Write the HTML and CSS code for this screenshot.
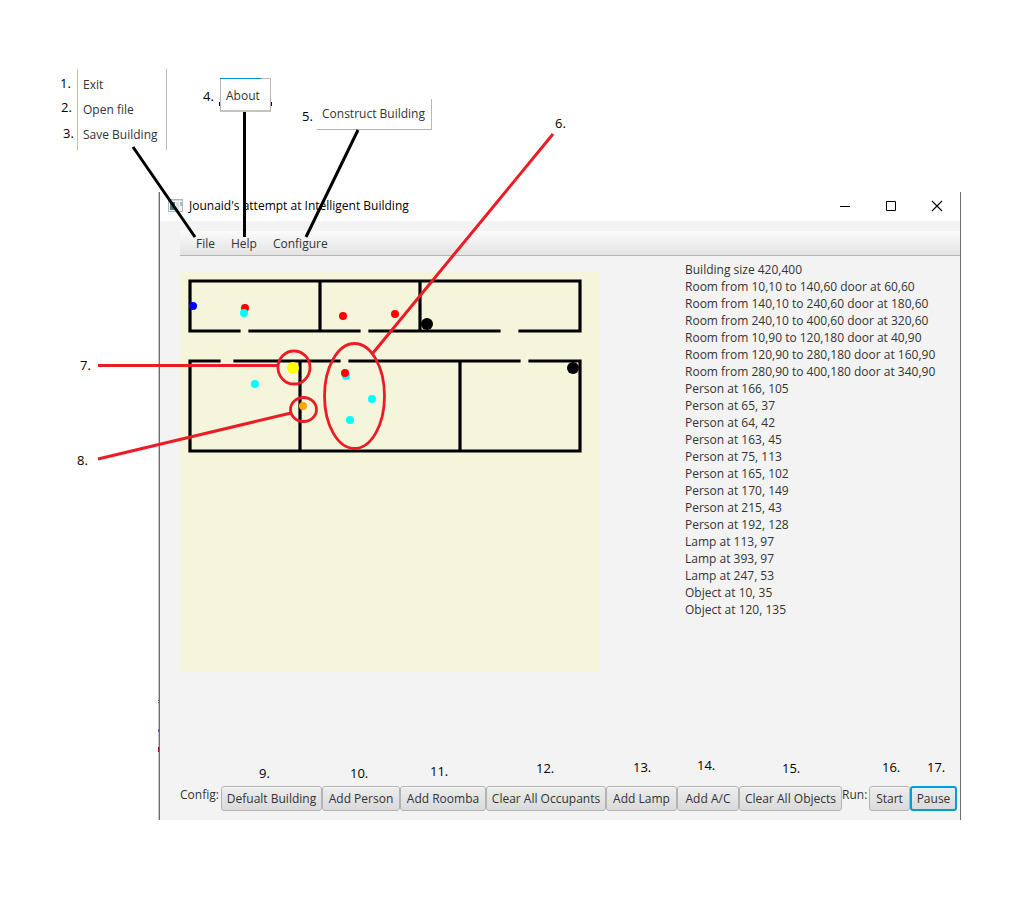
FILE: index.html
```html
<!DOCTYPE html>
<html lang="en">
<head>
<meta charset="utf-8">
<title>Intelligent Building user guide</title>
<link rel="stylesheet" href="styles.css">
</head>
<body>
<main class="stage">
  <section class="window">
    <header class="titlebar">
      <svg class="app-icon" width="15" height="13" viewBox="0 0 15 13" aria-hidden="true">
        <rect x=".5" y=".5" width="14" height="12" fill="#f4f4f4" stroke="#b4b4b4"/>
        <rect x="1" y="1" width="13" height="1" fill="#d8dce0"/>
        <rect x="2" y="3" width="5" height="8" fill="#3f7f86"/>
        <rect x="8" y="3" width="3" height="8" fill="#e0e0e0"/>
        <rect x="12" y="3" width="2" height="4" fill="#9fc4cc"/>
      </svg>
      <h1 class="title">Jounaid's attempt at Intelligent Building</h1>
      <div class="controls">
        <button class="control" type="button" aria-label="Minimize"><svg width="12" height="12" viewBox="0 0 12 12"><path d="M1 6.500h10" stroke="#000"/></svg></button>
        <button class="control" type="button" aria-label="Maximize"><svg width="12" height="12" viewBox="0 0 12 12"><path d="M1.500 1.500h9v9h-9z" fill="none" stroke="#000"/></svg></button>
        <button class="control" type="button" aria-label="Close"><svg width="12" height="12" viewBox="0 0 12 12"><path d="M1 1l10 10M11 1L1 11" stroke="#000" stroke-width="1.100"/></svg></button>
      </div>
    </header>
    <div class="content">
      <nav class="menubar">
        <button class="menu" type="button">File</button>
        <button class="menu" type="button">Help</button>
        <button class="menu" type="button">Configure</button>
      </nav>
      <div class="workspace">
        <svg class="plan" width="420" height="400" viewBox="0 0 420 400" role="img" aria-label="Building plan">
          <rect width="420" height="400" fill="#f5f5dc"/>
          <g fill="none" stroke="#000" stroke-width="3.200" stroke-linecap="square">
            <path d="M59 59H10V9H400V59H340M240 9V59M140 9V59M70 59H179M190 59H319"/>
            <path d="M39 89H10V179H400V89H350M55 89H159M170 89H339M120 89V179M280 89V179"/>
          </g>
          <circle cx="13" cy="34" r="4" fill="#00f"/>
          <circle cx="65" cy="36" r="4" fill="#f00"/>
          <circle cx="64" cy="41" r="4" fill="#0ff"/>
          <circle cx="163" cy="44" r="4" fill="#f00"/>
          <circle cx="215" cy="42" r="4" fill="#f00"/>
          <circle cx="247" cy="52" r="6"/>
          <circle cx="393" cy="96" r="6"/>
          <circle cx="113" cy="96" r="6" fill="#ff0"/>
          <circle cx="75" cy="112" r="4" fill="#0ff"/>
          <circle cx="166" cy="104" r="4" fill="#0ff"/>
          <circle cx="165" cy="101" r="4" fill="#f00"/>
          <circle cx="192" cy="127" r="4" fill="#0ff"/>
          <circle cx="170" cy="148" r="4" fill="#0ff"/>
          <circle cx="123" cy="134" r="4" fill="#ffa500"/>
        </svg>
        <ul class="log">
          <li>Building size 420,400</li>
          <li>Room from 10,10 to 140,60 door at 60,60</li>
          <li>Room from 140,10 to 240,60 door at 180,60</li>
          <li>Room from 240,10 to 400,60 door at 320,60</li>
          <li>Room from 10,90 to 120,180 door at 40,90</li>
          <li>Room from 120,90 to 280,180 door at 160,90</li>
          <li>Room from 280,90 to 400,180 door at 340,90</li>
          <li>Person at 166, 105</li>
          <li>Person at 65, 37</li>
          <li>Person at 64, 42</li>
          <li>Person at 163, 45</li>
          <li>Person at 75, 113</li>
          <li>Person at 165, 102</li>
          <li>Person at 170, 149</li>
          <li>Person at 215, 43</li>
          <li>Person at 192, 128</li>
          <li>Lamp at 113, 97</li>
          <li>Lamp at 393, 97</li>
          <li>Lamp at 247, 53</li>
          <li>Object at 10, 35</li>
          <li>Object at 120, 135</li>
        </ul>
      </div>
      <footer class="toolbar">
        <span class="caption">Config:</span>
        <button class="btn" type="button">Defualt Building</button>
        <button class="btn" type="button">Add Person</button>
        <button class="btn" type="button">Add Roomba</button>
        <button class="btn" type="button">Clear All Occupants</button>
        <button class="btn" type="button">Add Lamp</button>
        <button class="btn" type="button">Add A/C</button>
        <button class="btn" type="button">Clear All Objects</button>
        <span class="caption">Run:</span>
        <button class="btn" type="button">Start</button>
        <button class="btn btn-focus" type="button">Pause</button>
      </footer>
    </div>
  </section>

  <div class="popup popup-file">
    <button class="item" type="button">Exit</button>
    <button class="item" type="button">Open file</button>
    <button class="item" type="button">Save Building</button>
  </div>
  <div class="popup popup-help"><button class="item" type="button">About</button></div>
  <div class="popup popup-configure"><button class="item" type="button">Construct Building</button></div>

  <svg class="lines" width="1018" height="900" viewBox="0 0 1018 900" aria-hidden="true">
    <g fill="none" stroke="#000" stroke-width="3">
      <path d="M133 147L195 237M244.500 112V237M358 130L306 237"/>
    </g>
    <path d="M219 102h1v4h-1zM271 102h1v4h-1z"/>
    <path d="M220 78h41v1h-41z" fill="#0093c8"/>
    <g fill="none" stroke="#ed1c24" stroke-width="3">
      <path d="M553 134L373 353M98 365.500H278M98 459L291 413"/>
      <ellipse cx="354.500" cy="396" rx="30" ry="52.500" stroke-width="2.800"/>
      <ellipse cx="294" cy="367.500" rx="16" ry="16.500" stroke-width="2.800"/>
      <ellipse cx="303.500" cy="409.500" rx="13" ry="12" stroke-width="2.800"/>
    </g>
    <g fill="#3a66c8">
      <path d="M158 700h1v1h-1zM158 702h1v1h-1zM158 729h1v3h-1z"/>
      <path d="M158 747h1v5h-1z" fill="#80005a"/>
    </g>
  </svg>

  <span class="mark m1">1.</span>
  <span class="mark m2">2.</span>
  <span class="mark m3">3.</span>
  <span class="mark m4">4.</span>
  <span class="mark m5">5.</span>
  <span class="mark m6">6.</span>
  <span class="mark m7">7.</span>
  <span class="mark m8">8.</span>
  <span class="mark m9">9.</span>
  <span class="mark m10">10.</span>
  <span class="mark m11">11.</span>
  <span class="mark m12">12.</span>
  <span class="mark m13">13.</span>
  <span class="mark m14">14.</span>
  <span class="mark m15">15.</span>
  <span class="mark m16">16.</span>
  <span class="mark m17">17.</span>
</main>
</body>
</html>
```
FILE: styles.css
```css
* { box-sizing: border-box; }
body {
  margin: 0;
  background: #fff;
  color: #333;
  font: 12px/17px "Open Sans", "Noto Sans", sans-serif;
}
button { margin: 0; padding: 0; border: 0; background: none; color: inherit; font: inherit; white-space: nowrap; }
.stage { position: relative; min-height: 900px; padding: 192px 57px 80px 159px; }

.window {
  border-left: 1px solid #6e6e6e;
  border-right: 1px solid #6e6e6e;
  background: #f3f3f3;
  box-shadow: -1px 0 #c8c8c8;
}
.titlebar { display: flex; align-items: center; height: 29px; padding: 0 0 2px 8px; background: #fff; }
.app-icon { flex: none; }
.title { flex: 1; margin: 0 0 0 6px; color: #000; font-size: 12px; font-weight: 400; white-space: nowrap; }
.controls { display: flex; }
.control { display: flex; justify-content: center; align-items: center; width: 46px; height: 26px; }

.content { padding: 10px 0 9px 20px; }
.menubar {
  display: flex;
  height: 25px;
  padding-left: 8px;
  border-bottom: 1px solid #b5b5b5;
  background: linear-gradient(#fbfbfb, #e3e3e3);
}
.menu { padding: 0 8px; }

.workspace { display: flex; gap: 85px; min-height: 530px; padding-top: 5px; }
.plan { flex: none; margin-top: 11px; }
.log { margin: 0; padding: 0; list-style: none; white-space: nowrap; }

.toolbar {
  display: grid;
  grid-template-columns: 41fr 101fr 78fr 86fr 120fr 71fr 62fr 103fr 27fr 41fr 47fr;
  padding-right: 3px;
}
.toolbar > * { min-width: 0; }
.caption { white-space: nowrap; }
.btn {
  height: 25px;
  border: 1px solid #b3b3b3;
  border-radius: 3px;
  background: linear-gradient(#ededed, #dadada);
  box-shadow: inset 0 1px #f8f8f8;
}
.btn-focus { border: 2px solid #039ed3; box-shadow: none; }

.popup { position: absolute; display: flex; flex-direction: column; align-items: flex-start; background: #fff; }
.item { height: 25px; padding: 0 5px; }
.popup-file { left: 77px; top: 69px; width: 90px; height: 81px; padding-top: 3px; border-left: 1px solid #c4c4ac; border-right: 1px solid #b8b8b8; }
.popup-help { left: 220px; top: 78px; width: 51px; height: 34px; padding-top: 4px; border: 1px solid #b8b8b8; border-bottom: 2px solid #c4c4ba; }
.popup-configure { left: 317px; top: 99px; width: 115px; height: 31px; padding-top: 2px; border-right: 1px solid #b8b8b8; border-bottom: 1px solid #b0b0b0; }

.lines { position: absolute; left: 0; top: 0; pointer-events: none; }
.mark { position: absolute; color: #000; font: 13px/16px "Open Sans", "Noto Sans", sans-serif; }
.m1 { left: 60px; top: 75px; }
.m2 { left: 61px; top: 99px; }
.m3 { left: 63px; top: 125px; }
.m4 { left: 203px; top: 88px; }
.m5 { left: 302px; top: 108px; }
.m6 { left: 555px; top: 115px; }
.m7 { left: 80px; top: 357px; }
.m8 { left: 77px; top: 452px; }
.m9 { left: 259px; top: 765px; }
.m10 { left: 350px; top: 765px; }
.m11 { left: 430px; top: 763px; }
.m12 { left: 536px; top: 760px; }
.m13 { left: 633px; top: 759px; }
.m14 { left: 697px; top: 757px; }
.m15 { left: 782px; top: 760px; }
.m16 { left: 882px; top: 759px; }
.m17 { left: 927px; top: 759px; }
```
